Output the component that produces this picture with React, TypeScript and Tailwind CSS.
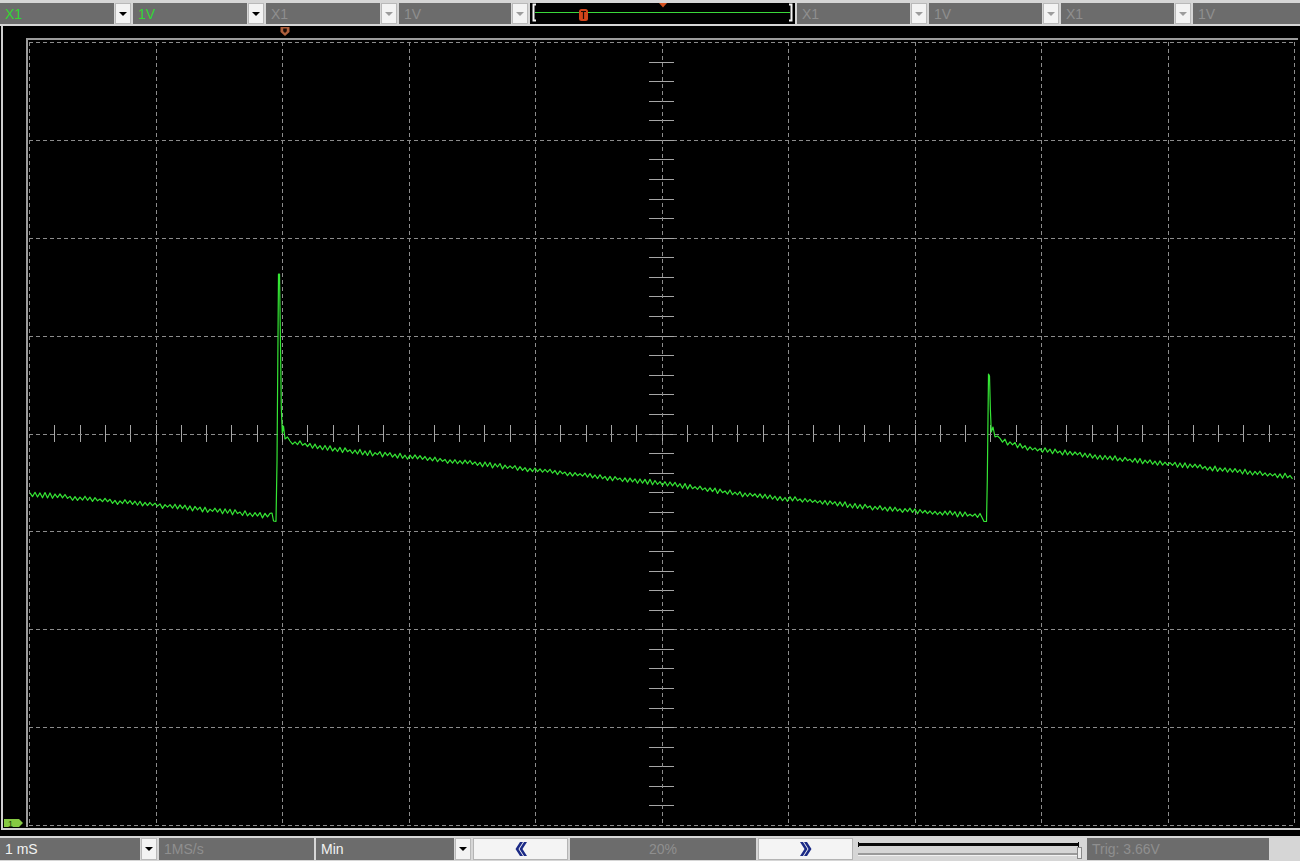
import React from 'react'

type P = [number, number]

// pseudo random, deterministic
const rnd = (i: number) => {
  const s = Math.sin(i * 127.1 + 311.7) * 43758.5453
  return s - Math.floor(s)
}

const interp = (anchors: P[], x: number) => {
  for (let k = 0; k < anchors.length - 1; k++) {
    const [x0, y0] = anchors[k]
    const [x1, y1] = anchors[k + 1]
    if (x >= x0 && x <= x1) return y0 + ((x - x0) / (x1 - x0)) * (y1 - y0)
  }
  return anchors[anchors.length - 1][1]
}

const noisy = (anchors: P[], seed: number): P[] => {
  const pts: P[] = []
  const x0 = anchors[0][0]
  const x1 = anchors[anchors.length - 1][0]
  let i = 0
  for (let x = x0; x <= x1; x += 2.5, i++) {
    const n = (i % 2 ? 1 : -1) * (0.9 + rnd(i + seed) * 1.9)
    pts.push([x, interp(anchors, x) + n])
  }
  return pts
}

const trace: P[] = [
  ...noisy(
    [
      [30, 494],
      [100, 500],
      [200, 509],
      [271, 516],
    ],
    1
  ),
  [272, 513],
  [273.5, 521],
  [276, 521.5],
  [277, 462],
  [278.5, 274],
  [279.5, 274],
  [280.3, 330],
  [281.3, 408],
  [282.3, 433],
  [283.5, 426],
  [285, 439],
  [287.5, 437],
  ...noisy(
    [
      [290, 442],
      [340, 450],
      [400, 456],
      [500, 466],
      [600, 477],
      [661, 483],
      [740, 494],
      [800, 500],
      [900, 510],
      [982, 516],
    ],
    50
  ),
  [984, 521.5],
  [986.5, 521.5],
  [987.3, 480],
  [988.5, 374],
  [989.5, 376],
  [990.4, 410],
  [991.3, 432],
  [993, 427],
  [995, 437],
  [997.5, 436],
  ...noisy(
    [
      [1000, 440],
      [1020, 446],
      [1040, 450],
      [1070, 453],
      [1100, 457],
      [1200, 467],
      [1294, 477],
    ],
    400
  ),
]

const tracePath = trace.map(([x, y], i) => `${i ? 'L' : 'M'}${x.toFixed(1)} ${y.toFixed(1)}`).join(' ')

const gx = (i: number) => Math.round(29 + i * 126.5) + 0.5
const gy = (j: number) => Math.round(42 + j * 97.875) + 0.5

function DropButton({ dim = false }: { dim?: boolean }) {
  return (
    <div className="flex w-[16px] items-center justify-center border border-[#b9b9b9] bg-[#f3f3f3]">
      <span
        className={
          dim
            ? 'block h-0 w-0 border-x-[4px] border-t-[4px] border-x-transparent border-t-[#9c9c9c]'
            : 'block h-0 w-0 border-x-[4px] border-t-[4px] border-x-transparent border-t-black'
        }
      />
    </div>
  )
}

function Combo({
  label,
  tone,
  className,
  button = true,
  center = false,
}: {
  label: string
  tone: 'green' | 'dim' | 'white'
  className: string
  button?: boolean
  center?: boolean
}) {
  const color = tone === 'green' ? 'text-[#33d833]' : tone === 'white' ? 'text-[#f2f2f2]' : 'text-[#8f8f8f]'
  return (
    <div className={`flex h-full gap-px ${className}`}>
      <div
        className={`flex flex-1 items-center bg-[#6c6c6c] text-[14px] leading-none ${color} ${
          center ? 'justify-center' : 'pl-[5px]'
        }`}
      >
        {label}
      </div>
      {button && <DropButton dim={tone === 'dim'} />}
    </div>
  )
}

function TriggerStrip() {
  return (
    <div className="h-full w-[265px] bg-black">
      <svg width="265" height="21" className="block">
        <path d="M6 1.5 H3.5 V17.5 H6" stroke="#f4f4f4" strokeWidth="2" fill="none" />
        <path d="M259 1.5 H261.5 V17.5 H259" stroke="#f4f4f4" strokeWidth="2" fill="none" />
        <line x1="5" y1="9.5" x2="260" y2="9.5" stroke="#3ad83a" strokeWidth="1" />
        <polygon points="129,0 137,0 133,4.5" fill="#d4501f" />
        <rect x="49" y="6" width="9" height="12" rx="2.5" fill="#d2451a" />
        <path d="M51 8.5 H56 M53.5 8.5 V16" stroke="#1a0a05" strokeWidth="1.2" />
      </svg>
    </div>
  )
}

function Chevrons({ dir }: { dir: 'left' | 'right' }) {
  return (
    <svg width="12" height="14" viewBox="0 0 12 14" className={dir === 'right' ? 'block -scale-x-100' : 'block'}>
      <polygon points="5,0 8,0 3.5,7 8,14 5,14 0.5,7" fill="#1b2a86" />
      <polygon points="9,0 12,0 7.5,7 12,14 9,14 4.5,7" fill="#1b2a86" />
    </svg>
  )
}

function NavButton({ dir }: { dir: 'left' | 'right' }) {
  return (
    <div className="flex h-full w-[95px] items-center justify-center border border-[#b4b4b4] bg-[#f4f4f4]">
      <Chevrons dir={dir} />
    </div>
  )
}

function TimeSlider() {
  return (
    <div className="h-full w-[230px]">
      <svg width="230" height="22" className="block">
        <rect x="3" y="5" width="221" height="3" fill="#0a0a0a" />
        <rect x="3" y="4" width="1" height="5" fill="#0a0a0a" />
        <rect x="223" y="4" width="1" height="5" fill="#0a0a0a" />
        <rect x="3" y="15" width="221" height="2" fill="#9a9a9a" />
        <rect x="3" y="17" width="221" height="1" fill="#f2f2f2" />
        <rect x="222.5" y="9.5" width="4" height="11" fill="#ececec" stroke="#8a8a8a" />
      </svg>
    </div>
  )
}

function Scope() {
  const vlines = Array.from({ length: 11 }, (_, i) => gx(i))
  const hlines = Array.from({ length: 9 }, (_, j) => gy(j))
  const xTicks = Array.from({ length: 49 }, (_, k) => Math.round(29 + (k + 1) * 25.3) + 0.5)
  const yTicks = Array.from({ length: 39 }, (_, k) => Math.round(42 + (k + 1) * 19.575) + 0.5)
  const cx = gx(5)
  const cy = gy(4)

  return (
    <div className="bg-black pb-[6px] pl-px">
      <div className="border-b-2 border-l-2 border-[#cfcfcf]">
        <svg width="1297" height="802" className="block">
          <g transform="translate(-3 -26)">
            {/* outer frame */}
            <line x1="27" y1="38" x2="27" y2="827" stroke="#9c9c9c" strokeWidth="2" />
            <line x1="26" y1="39" x2="1298" y2="39" stroke="#9c9c9c" strokeWidth="2" />

            {/* dashed grid */}
            {vlines.map((x) => (
              <line key={`v${x}`} x1={x} y1="42" x2={x} y2="826" stroke="#8c8c8c" strokeDasharray="4 3" />
            ))}
            {hlines.map((y) => (
              <line key={`h${y}`} x1="29" y1={y} x2="1295" y2={y} stroke="#8c8c8c" strokeDasharray="4 3" />
            ))}

            {/* axis ticks */}
            {xTicks.map((x) => (
              <line key={`tx${x}`} x1={x} y1="425" x2={x} y2="442" stroke="#a6a6a6" />
            ))}
            {yTicks.map((y) => (
              <line key={`ty${y}`} x1="649" y1={y} x2="674" y2={y} stroke="#a6a6a6" />
            ))}
            <line x1={cx} y1="42" x2={cx} y2="826" stroke="#8c8c8c" strokeDasharray="4 3" />
            <line x1="29" y1={cy} x2="1295" y2={cy} stroke="#8c8c8c" strokeDasharray="4 3" />

            {/* trigger position marker */}
            <polygon points="280.5,27 289.5,27 289.5,32 285,36 280.5,32" fill="#ad5f3c" />
            <polygon points="283.2,28.5 286.8,28.5 286.8,31.2 285,33 283.2,31.2" fill="#1a0c06" />

            {/* channel 1 waveform */}
            <path d={tracePath} stroke="#35e635" strokeWidth="1.2" fill="none" strokeLinejoin="round" />

            {/* channel 1 ground marker */}
            <polygon points="4,819 19,819 23,823 19,827 4,827" fill="#86c943" />
            <text x="8" y="826.5" fontSize="9" fill="#1d3a08" fontFamily="Liberation Sans, Arial, sans-serif">
              1
            </text>
          </g>
        </svg>
      </div>
    </div>
  )
}

export default function App() {
  return (
    <div className="flex h-[861px] w-[1300px] flex-col overflow-hidden bg-[#d6d6d6] font-['Liberation_Sans',Arial,sans-serif]">
      <div className="flex h-[26px] gap-[2px] pb-[2px] pt-[3px]">
        <Combo label="X1" tone="green" className="w-[131px]" />
        <Combo label="1V" tone="green" className="w-[131px]" />
        <Combo label="X1" tone="dim" className="w-[131px]" />
        <Combo label="1V" tone="dim" className="w-[129px]" />
        <TriggerStrip />
        <Combo label="X1" tone="dim" className="w-[130px]" />
        <Combo label="1V" tone="dim" className="w-[130px]" />
        <Combo label="X1" tone="dim" className="w-[130px]" />
        <Combo label="1V" tone="dim" className="flex-1" button={false} />
      </div>

      <Scope />

      <div className="flex h-[25px] gap-[2px] pb-px pt-[2px]">
        <Combo label="1 mS" tone="white" className="w-[157px]" />
        <Combo label="1MS/s" tone="dim" className="w-[155px]" button={false} />
        <Combo label="Min" tone="white" className="w-[155px]" />
        <NavButton dir="left" />
        <Combo label="20%" tone="dim" className="w-[186px]" button={false} center />
        <NavButton dir="right" />
        <TimeSlider />
        <Combo label="Trig: 3.66V" tone="dim" className="w-[182px]" button={false} />
        <div className="flex-1" />
      </div>
    </div>
  )
}
